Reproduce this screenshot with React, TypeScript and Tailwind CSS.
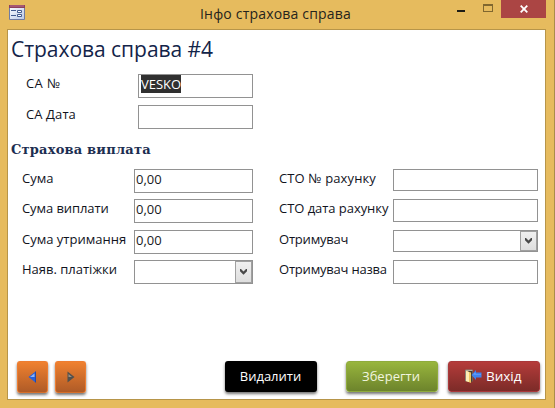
import React from "react";

type FieldProps = {
  label: string;
  value?: string;
  tracking?: string;
  select?: boolean;
  selected?: boolean;
  row: string;
  labelBox: string;
  box: string;
};

function Chevron() {
  return (
    <span className="flex h-full w-[17px] shrink-0 items-center justify-center border border-[#a0a0a0] bg-gradient-to-b from-[#f0f0f0] to-[#dedede]">
      <svg width="7" height="6" viewBox="0 0 7 6">
        <path d="M0 0H1L3.5 2.5L6 0H7V2.2L3.5 5.7L0 2.2Z" fill="#484848" />
      </svg>
    </span>
  );
}

function Field({ label, value = "", tracking = "", select, selected, row, labelBox, box }: FieldProps) {
  return (
    <div className={`flex items-start ${row}`}>
      <span className={`shrink-0 whitespace-nowrap text-[13px] leading-[19px] text-[#11131d] ${labelBox} ${tracking}`}>{label}</span>
      <div className={`flex shrink-0 justify-between border border-[#929292] bg-white ${box}`}>
        <span className={`text-[13px] ${selected ? "ml-0.5 h-[18px] bg-[#303030] leading-[18px] text-white" : "ml-px leading-[19px] text-[#181a22]"}`}>{value}</span>
        {select && <Chevron />}
      </div>
    </div>
  );
}

function Arrow({ left }: { left?: boolean }) {
  return (
    <button className="flex h-8 w-[31px] items-center justify-center rounded-[3px] border border-[#ed7d31] border-b-[#d66f2a] bg-gradient-to-b from-[#f0812f] to-[#af5b27] shadow-[0_2px_3px_rgba(0,0,0,0.55)]">
      <svg width="9" height="12" viewBox="0 0 9 12">
        {left ? (
          <>
            <path d="M7.5 0.5V11.5L0.5 6Z" fill="#2861da" />
            <path d="M6.5 2.5V6L2 6Z" fill="#8db4f5" />
            <path d="M7.5 0.5V11.5" stroke="#274aa3" />
          </>
        ) : (
          <>
            <path d="M1.5 0.5V11.5L8.5 6Z" fill="#51504d" />
            <path d="M2.5 3V6H6Z" fill="#9b8f82" />
          </>
        )}
      </svg>
    </button>
  );
}

export default function App() {
  return (
    <div className="flex h-[408px] w-[555px] flex-col overflow-hidden border-r border-[#a98d4b] bg-[#e6bb5e] pr-2 pl-[7px] font-['Open_Sans','Noto_Sans',sans-serif]">
      <header className="flex h-[29px] shrink-0 items-start">
        <svg className="mt-[5px] ml-[2px] shrink-0" width="16" height="15" viewBox="0 0 16 15">
          <defs>
            <linearGradient id="form" x2="1" y2="1">
              <stop stopColor="#fff" />
              <stop offset="1" stopColor="#bac9e8" />
            </linearGradient>
          </defs>
          <path d="M0.5 0.5H15.5V14.5H0.5Z" fill="url(#form)" stroke="#707ca3" />
          <path d="M0 0H16V3H0Z" fill="#8d405e" />
          <path d="M1 1H15" stroke="#bc7189" />
          <path d="M2 5.5H7M2 10.5H7" stroke="#435b8f" />
          <path d="M8.5 5.5H12.5V7.5H8.5ZM8.5 9.5H12.5V11.5H8.5Z" fill="#fff" stroke="#435b8f" />
        </svg>
        <h1 className="ml-[175px] w-[155px] shrink-0 pt-1 text-[14px] leading-5 tracking-[0.19px] whitespace-nowrap text-[#25241c]">Інфо страхова справа</h1>
        <span className="mt-2.5 ml-[102px] h-0.5 w-2 shrink-0 bg-[#1d1c15]" />
        <span className="mt-1 ml-[18px] h-2 w-2.5 shrink-0 border border-t-2 border-[#80672f]" />
        <button className="ml-2 flex h-[18px] w-[45px] shrink-0 items-center justify-center bg-[#ab4544]">
          <svg width="8" height="8" viewBox="0 0 8 8">
            <path d="M0.7 0.7L7.3 7.3M7.3 0.7L0.7 7.3" stroke="#fff" strokeWidth="1.8" />
          </svg>
        </button>
      </header>

      <main className="flex h-[371px] w-[539px] shrink-0 flex-col border border-[#b79549] bg-white">
        <h2 className="h-[44px] shrink-0 pt-1 pl-[3px] text-[21px] leading-[30px] tracking-[-0.04px] whitespace-nowrap text-[#132449]">Страхова справа #4</h2>
        <section className="h-[64px] shrink-0 pl-[18px]">
          <Field label="СА №" value="VESKO" selected tracking="tracking-[0.4px]" row="h-[31px]" labelBox="w-28" box="h-6 w-[115px]" />
          <Field label="СА Дата" tracking="tracking-[0.1px]" row="h-[31px]" labelBox="w-28" box="h-6 w-[115px]" />
        </section>
        <h3 className="h-[31px] shrink-0 pt-px pl-[3px] font-['DejaVu_Serif',serif] text-[13px] leading-[22px] font-bold tracking-[0.2px] whitespace-nowrap text-[#1c2e51]">Страхова виплата</h3>
        <section className="flex h-[192px] shrink-0 pl-[14px]">
          <div className="w-[257px] shrink-0">
            <Field label="Сума" value="0,00" row="h-[30px]" labelBox="w-28" box="h-6 w-[119px]" />
            <Field label="Сума виплати" value="0,00" tracking="tracking-[-0.08px]" row="h-[31px]" labelBox="w-28" box="h-6 w-[119px]" />
            <Field label="Сума утримання" value="0,00" row="h-[30px]" labelBox="w-28" box="h-6 w-[119px]" />
            <Field label="Наяв. платіжки" select row="h-[30px]" labelBox="w-28" box="h-6 w-[119px]" />
          </div>
          <div>
            <Field label="СТО № рахунку" tracking="tracking-[0.12px]" row="h-[30px]" labelBox="w-[114px]" box="h-[22px] w-[145px]" />
            <Field label="СТО дата рахунку" tracking="tracking-[-0.05px]" row="h-[31px]" labelBox="w-[114px]" box="h-[23px] w-[145px]" />
            <Field label="Отримувач" select tracking="tracking-[-0.2px]" row="h-[30px]" labelBox="w-[114px]" box="h-[22px] w-[145px]" />
            <Field label="Отримувач назва" tracking="tracking-[-0.2px]" row="h-[30px]" labelBox="w-[114px]" box="h-6 w-[145px]" />
          </div>
        </section>
        <footer className="flex shrink-0 items-start pl-[9px] text-[13px] whitespace-nowrap text-white">
          <Arrow left />
          <div className="ml-[7px]"><Arrow /></div>
          <button className="ml-[139px] h-[31px] w-[92px] rounded-[3px] bg-black pr-px shadow-[0_2px_3px_rgba(0,0,0,0.55)]">Видалити</button>
          <button className="ml-[29px] h-[31px] w-[92px] rounded-[3px] border border-[#8fab3c] bg-gradient-to-b from-[#98b53d] to-[#6d842c] pr-0.5 text-[#f1f5df] shadow-[0_2px_3px_rgba(0,0,0,0.55)]">Зберегти</button>
          <button className="ml-[10px] flex h-[31px] w-[92px] items-center rounded-[3px] border border-[#a9383a] bg-gradient-to-b from-[#b53c3a] to-[#7c2b28] pl-4 shadow-[0_2px_3px_rgba(0,0,0,0.55)]">
            <svg width="17" height="15" viewBox="0 0 17 15">
              <path d="M0.5 1H7.5V12H0.5Z" fill="#d9d4c4" stroke="#8c867a" />
              <path d="M5 4V14L7.5 12V2H2Z" fill="#4a3b34" />
              <path d="M1 2L6 3.5V14L1 12Z" fill="#efc661" />
              <path d="M1 2L4 3V13L1 12Z" fill="#ffedb5" />
              <path d="M6.5 6L11 1V3.5H16.5V8.5H11V11Z" fill="#3f83ee" />
              <path d="M8 5.5L10.5 3.5V5H16V5.5Z" fill="#78aafa" />
            </svg>
            <span className="ml-1 text-[13.5px]">Вихід</span>
          </button>
        </footer>
      </main>
    </div>
  );
}
